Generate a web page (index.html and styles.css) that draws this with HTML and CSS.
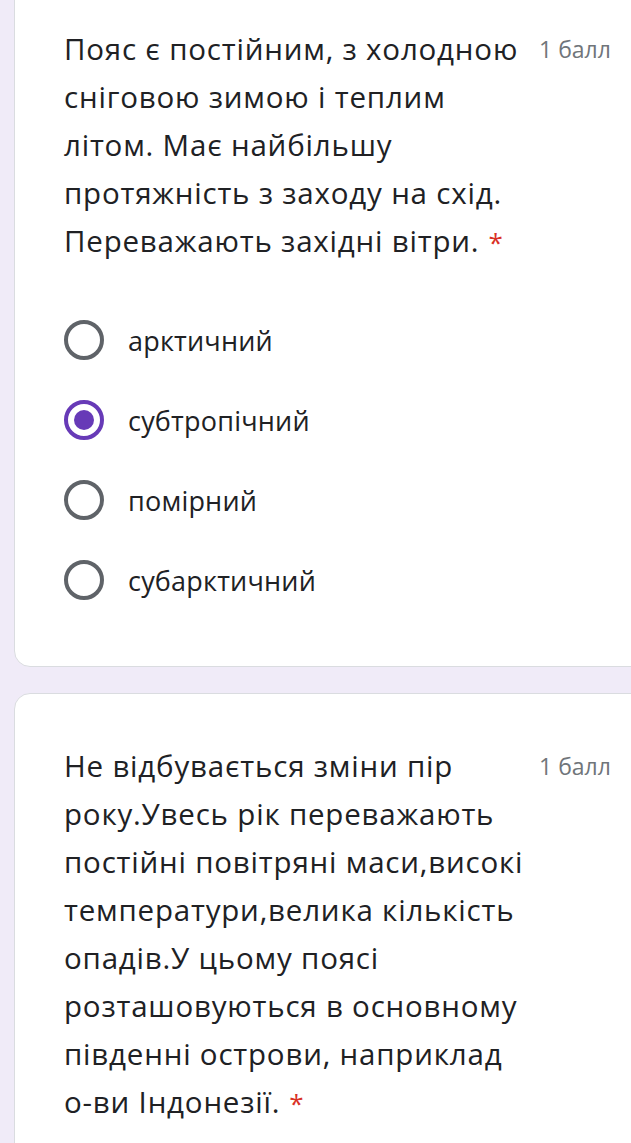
FILE: index.html
```html
<!DOCTYPE html>
<html lang="uk">
<head>
<meta charset="utf-8">
<link rel="stylesheet" href="styles.css">
</head>
<body>
<div class="page">
  <section class="card card-first">
    <div class="head">
      <div class="title">Пояс є постійним, з холодною сніговою зимою і теплим літом. Має найбільшу протяжність з заходу на схід. Переважають західні вітри.<span class="req">*</span></div>
      <div class="points">1 балл</div>
    </div>
    <div class="options">
      <label class="opt"><span class="radio"></span><span class="lbl">арктичний</span></label>
      <label class="opt"><span class="radio on"></span><span class="lbl">субтропічний</span></label>
      <label class="opt"><span class="radio"></span><span class="lbl">помірний</span></label>
      <label class="opt"><span class="radio"></span><span class="lbl">субарктичний</span></label>
    </div>
  </section>
  <section class="card card-second">
    <div class="head">
      <div class="title">Не відбувається зміни пір року.Увесь рік переважають постійні повітряні маси,високі температури,велика кількість опадів.У цьому поясі розташовуються в основному південні острови, наприклад о-ви Індонезії.<span class="req">*</span></div>
      <div class="points">1 балл</div>
    </div>
  </section>
</div>
</body>
</html>
```
FILE: styles.css
```css
html, body {
  margin: 0;
  padding: 0;
  background: #f0ebf8;
  overflow: hidden;
}
body {
  width: 631px;
  height: 1143px;
  font-family: "Open Sans", Roboto, sans-serif;
  color: #202124;
}
.page {
  display: flex;
  flex-direction: column;
  gap: 26px;
  padding-left: 14px;
}
.card {
  width: 660px;
  background: #fff;
  border: 1px solid #dadce0;
  border-radius: 16px;
  box-sizing: border-box;
  padding-left: 49px;
}
.card-first {
  margin-top: -30px;
  padding-top: 54px;
  padding-bottom: 46px;
}
.card-second {
  padding-top: 48px;
  padding-bottom: 60px;
}
.head {
  display: flex;
  align-items: flex-start;
}
.title {
  width: 468px;
  font-size: 29.5px;
  line-height: 48px;
  letter-spacing: 0.8px;
}
.req {
  margin-left: 9px;
  font-size: 26px;
  color: #d93025;
}
.points {
  margin-left: 7px;
  font-size: 23px;
  line-height: 48px;
  color: #70757a;
  white-space: nowrap;
}
.options {
  margin-top: 34px;
  display: flex;
  flex-direction: column;
}
.opt {
  display: flex;
  align-items: center;
  height: 80px;
}
.radio {
  width: 40px;
  height: 40px;
  box-sizing: border-box;
  border: 4px solid #5f6368;
  border-radius: 50%;
  display: flex;
  align-items: center;
  justify-content: center;
  flex-shrink: 0;
}
.radio.on {
  border-color: #673ab7;
}
.radio.on::after {
  content: "";
  width: 20px;
  height: 20px;
  border-radius: 50%;
  background: #673ab7;
}
.lbl {
  margin-left: 24px;
  font-size: 27px;
  letter-spacing: 0.2px;
  color: #202124;
}
```
